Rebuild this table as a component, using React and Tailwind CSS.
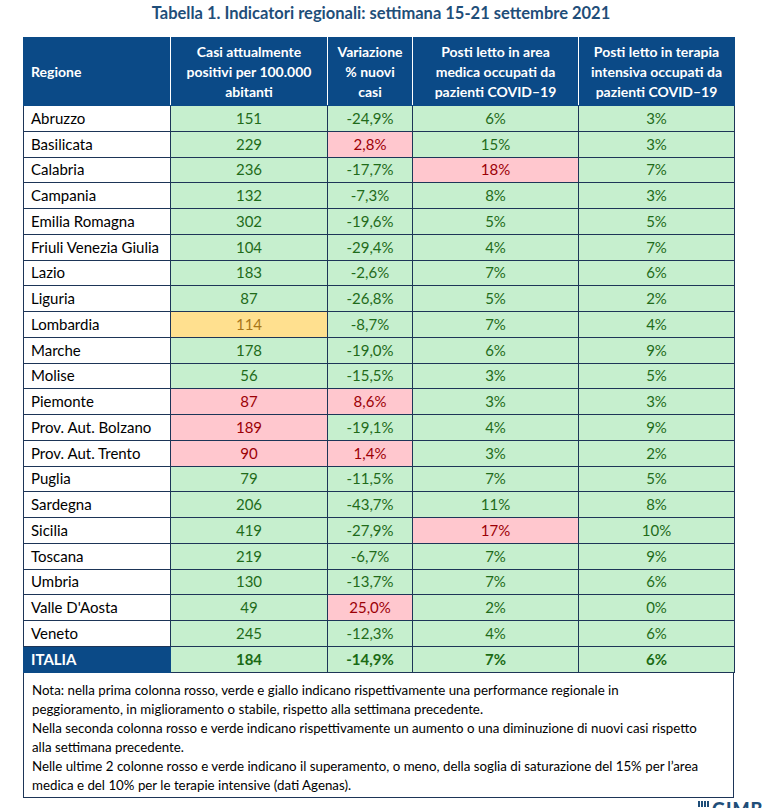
import React from 'react';

const G = 'g', R = 'r', Y = 'y';

// [regione, casi, tipo, variazione, tipo, area medica, tipo, terapia intensiva, tipo]
const rows = [
  ['Abruzzo', '151', G, '-24,9%', G, '6%', G, '3%', G],
  ['Basilicata', '229', G, '2,8%', R, '15%', G, '3%', G],
  ['Calabria', '236', G, '-17,7%', G, '18%', R, '7%', G],
  ['Campania', '132', G, '-7,3%', G, '8%', G, '3%', G],
  ['Emilia Romagna', '302', G, '-19,6%', G, '5%', G, '5%', G],
  ['Friuli Venezia Giulia', '104', G, '-29,4%', G, '4%', G, '7%', G],
  ['Lazio', '183', G, '-2,6%', G, '7%', G, '6%', G],
  ['Liguria', '87', G, '-26,8%', G, '5%', G, '2%', G],
  ['Lombardia', '114', Y, '-8,7%', G, '7%', G, '4%', G],
  ['Marche', '178', G, '-19,0%', G, '6%', G, '9%', G],
  ['Molise', '56', G, '-15,5%', G, '3%', G, '5%', G],
  ['Piemonte', '87', R, '8,6%', R, '3%', G, '3%', G],
  ['Prov. Aut. Bolzano', '189', R, '-19,1%', G, '4%', G, '9%', G],
  ['Prov. Aut. Trento', '90', R, '1,4%', R, '3%', G, '2%', G],
  ['Puglia', '79', G, '-11,5%', G, '7%', G, '5%', G],
  ['Sardegna', '206', G, '-43,7%', G, '11%', G, '8%', G],
  ['Sicilia', '419', G, '-27,9%', G, '17%', R, '10%', G],
  ['Toscana', '219', G, '-6,7%', G, '7%', G, '9%', G],
  ['Umbria', '130', G, '-13,7%', G, '7%', G, '6%', G],
  ["Valle D'Aosta", '49', G, '25,0%', R, '2%', G, '0%', G],
  ['Veneto', '245', G, '-12,3%', G, '4%', G, '6%', G],
];

const tone = {
  g: 'bg-[#c6efce] text-[#1f6b1a]',
  r: 'bg-[#ffc7ce] text-[#9c0006]',
  y: 'bg-[#ffe08f] text-[#a8761a]',
};

const Val = ({ v, t }) => (
  <td className={`border border-[#1d3557] text-center p-0 ${tone[t]}`}>{v}</td>
);

const nota = [
  'Nota: nella prima colonna rosso, verde e giallo indicano rispettivamente una performance regionale in',
  'peggioramento, in miglioramento o stabile, rispetto alla settimana precedente.',
  'Nella seconda colonna rosso e verde indicano rispettivamente un aumento o una diminuzione di nuovi casi rispetto',
  'alla settimana precedente.',
  'Nelle ultime 2 colonne rosso e verde indicano il superamento, o meno, della soglia di saturazione del 15% per l’area',
  'medica e del 10% per le terapie intensive (dati Agenas).',
];

export default function App() {
  return (
    <div className="w-[762px] h-[808px] bg-white overflow-hidden relative" style={{ fontFamily: 'Lato, "Liberation Sans", sans-serif' }}>
      <h1 className="h-[37px] flex items-center justify-center text-[16.5px] font-bold text-[#1f4e79] pb-[11px]">
        Tabella 1. Indicatori regionali: settimana 15-21 settembre 2021
      </h1>

      <table className="ml-[23px] w-[711px] table-fixed border-collapse text-[15px] leading-none">
        <colgroup>
          <col className="w-[147px]" />
          <col className="w-[157px]" />
          <col className="w-[85px]" />
          <col className="w-[166px]" />
          <col className="w-[156px]" />
        </colgroup>
        <thead>
          <tr className="h-[68px] bg-[#0b4a87] text-white font-bold text-[14px] leading-[20px]">
            <th className="text-left pl-[7px] border border-[#0b4a87] border-r-white">Regione</th>
            <th className="text-center px-1 border border-[#0b4a87] border-r-white">Casi attualmente positivi per 100.000 abitanti</th>
            <th className="text-center px-[8px] border border-[#0b4a87] border-r-white">Variazione % nuovi casi</th>
            <th className="text-center px-2 border border-[#0b4a87] border-r-white">Posti letto in area medica occupati da pazienti COVID–19</th>
            <th className="text-center px-1 border border-[#0b4a87]">Posti letto in terapia intensiva occupati da pazienti COVID–19</th>
          </tr>
        </thead>
        <tbody>
          {rows.map((r) => (
            <tr key={r[0]} className="h-[25.76px]">
              <td className="border border-[#1d3557] pl-[7px] text-black bg-white whitespace-nowrap">{r[0]}</td>
              <Val v={r[1]} t={r[2]} />
              <Val v={r[3]} t={r[4]} />
              <Val v={r[5]} t={r[6]} />
              <Val v={r[7]} t={r[8]} />
            </tr>
          ))}
          <tr className="h-[25.76px] font-bold">
            <td className="border border-[#0b4a87] bg-[#0b4a87] text-white pl-[7px]">ITALIA</td>
            <td className="border border-[#1d3557] text-center bg-[#c6efce] text-[#1a6b14]">184</td>
            <td className="border border-[#1d3557] text-center bg-[#c6efce] text-[#1a6b14]">-14,9%</td>
            <td className="border border-[#1d3557] text-center bg-[#c6efce] text-[#1a6b14]">7%</td>
            <td className="border border-[#1d3557] text-center bg-[#c6efce] text-[#1a6b14]">6%</td>
          </tr>
        </tbody>
      </table>

      <div className="ml-[23px] w-[711px] h-[125px] border border-t-0 border-[#1d3557] pl-[8px] pt-[8px] text-[13.3px] leading-[19px] text-black">
        {nota.map((l) => (
          <p key={l} className="whitespace-nowrap">{l}</p>
        ))}
      </div>

      {/* logo GIMBE, tagliato in basso */}
      <div className="absolute left-[698px] top-[800px] flex items-start gap-[3px]">
        <div className="flex gap-[1px] mt-[1px]">
          <span className="w-[2px] h-[6px] bg-[#1f4e79]" />
          <span className="w-[2px] h-[6px] bg-[#1f4e79]" />
          <span className="w-[2px] h-[6px] bg-[#1f4e79]" />
          <span className="w-[2px] h-[6px] bg-[#1f4e79]" />
        </div>
        <span className="text-[18px] leading-none font-black text-[#1f4e79] tracking-[1px]">GIMBE</span>
      </div>
    </div>
  );
}
